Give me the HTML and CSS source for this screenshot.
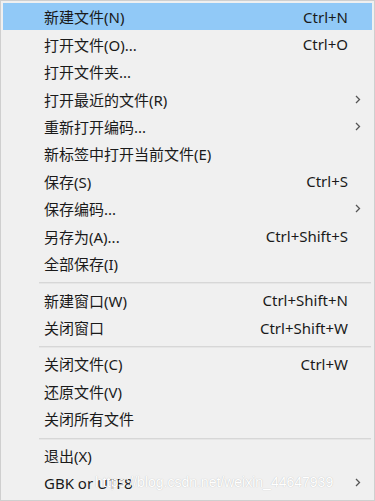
FILE: index.html
```html
<!DOCTYPE html>
<html lang="zh-CN">
<head>
  <meta charset="UTF-8">
  <meta name="viewport" content="width=device-width, initial-scale=1.0">
  <title>文件菜单</title>
  <link rel="stylesheet" href="styles.css">
</head>
<body>
  <div class="menu">
    <ul class="menu-list">
      <li class="item active"><span class="label">新建文件(N)</span><span class="key">Ctrl+N</span><span class="sub"></span></li>
      <li class="item"><span class="label">打开文件(O)...</span><span class="key">Ctrl+O</span><span class="sub"></span></li>
      <li class="item"><span class="label">打开文件夹...</span><span class="sub"></span></li>
      <li class="item"><span class="label">打开最近的文件(R)</span><span class="sub"><svg width="6" height="9" viewBox="0 0 6 9"><path d="M1 1l3.5 3.5L1 8" fill="none" stroke="#555" stroke-width="1.3"/></svg></span></li>
      <li class="item"><span class="label">重新打开编码...</span><span class="sub"><svg width="6" height="9" viewBox="0 0 6 9"><path d="M1 1l3.5 3.5L1 8" fill="none" stroke="#555" stroke-width="1.3"/></svg></span></li>
      <li class="item"><span class="label">新标签中打开当前文件(E)</span><span class="sub"></span></li>
      <li class="item"><span class="label">保存(S)</span><span class="key">Ctrl+S</span><span class="sub"></span></li>
      <li class="item"><span class="label">保存编码...</span><span class="sub"><svg width="6" height="9" viewBox="0 0 6 9"><path d="M1 1l3.5 3.5L1 8" fill="none" stroke="#555" stroke-width="1.3"/></svg></span></li>
      <li class="item"><span class="label">另存为(A)...</span><span class="key">Ctrl+Shift+S</span><span class="sub"></span></li>
      <li class="item"><span class="label">全部保存(I)</span><span class="sub"></span></li>
      <li class="sep"></li>
      <li class="item"><span class="label">新建窗口(W)</span><span class="key">Ctrl+Shift+N</span><span class="sub"></span></li>
      <li class="item"><span class="label">关闭窗口</span><span class="key">Ctrl+Shift+W</span><span class="sub"></span></li>
      <li class="sep"></li>
      <li class="item"><span class="label">关闭文件(C)</span><span class="key">Ctrl+W</span><span class="sub"></span></li>
      <li class="item"><span class="label">还原文件(V)</span><span class="sub"></span></li>
      <li class="item"><span class="label">关闭所有文件</span><span class="sub"></span></li>
      <li class="sep"></li>
      <li class="item"><span class="label">退出(X)</span><span class="sub"></span></li>
      <li class="item"><span class="label">GBK or UTF8</span><span class="sub"><svg width="6" height="9" viewBox="0 0 6 9"><path d="M1 1l3.5 3.5L1 8" fill="none" stroke="#555" stroke-width="1.3"/></svg></span></li>
    </ul>
    <div class="watermark">https://blog.csdn.net/weixin_44647939</div>
  </div>
</body>
</html>
```

FILE: styles.css
```css
* {
  margin: 0;
  padding: 0;
  box-sizing: border-box;
}

body {
  font-family: "Noto Sans", "Noto Sans CJK SC", sans-serif;
  background-color: #fff;
  font-size: 15px;
  color: #1a1a1a;
}

.menu {
  position: relative;
  width: 375px;
  height: 501px;
  background-color: #f0f0f0;
  border: 1px solid #cfcfcf;
  padding: 2px;
}

.menu-list {
  list-style: none;
}

.item {
  display: flex;
  align-items: center;
  height: 27.45px;
  padding-left: 41px;
  white-space: nowrap;
}

.item.active {
  background-color: #91c9f7;
}

.label {
  flex: 1;
}

.key {
  text-align: right;
}

.sub {
  width: 24px;
  display: flex;
  align-items: center;
  padding-left: 7px;
}

.sep {
  height: 2px;
  background-color: #d7d7d7;
  border-bottom: 1px solid #e6e6e6;
  margin: 5px 1px 2px 36px;
}

.watermark {
  position: absolute;
  left: 94px;
  bottom: 10px;
  font-family: "Liberation Sans", Arial, sans-serif;
  font-size: 14px;
  color: #fff;
  text-shadow: 0 0 1px rgba(0, 0, 0, 0.25);
  white-space: nowrap;
}
```
